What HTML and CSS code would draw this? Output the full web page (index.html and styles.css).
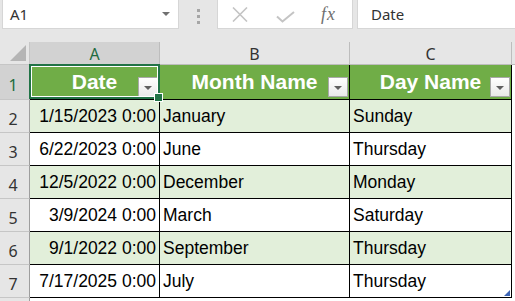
FILE: index.html
```html
<!DOCTYPE html>
<html lang="en">
<head>
<meta charset="utf-8">
<title>Sheet</title>
<link rel="stylesheet" href="styles.css">
</head>
<body>
  <div class="topbar">
    <div class="namebox">
      <span class="ref">A1</span>
      <span class="drop"></span>
    </div>
    <div class="dots"><i></i><i></i><i></i></div>
    <div class="fbtns">
      <svg class="ico-x" width="16" height="15" viewBox="0 0 16 15"><path d="M1 0.5 L15 14.5 M15 0.5 L1 14.5" stroke="#c4c4c4" stroke-width="1.6" fill="none"/></svg>
      <svg class="ico-ok" width="19" height="12" viewBox="0 0 19 12"><path d="M1 5.5 L6.5 10.5 L18 1" stroke="#c4c4c4" stroke-width="2" fill="none"/></svg>
      <span class="fx">fx</span>
    </div>
    <div class="finput">Date</div>
  </div>

  <div class="sheet">
    <div class="corner"><span class="tri"></span></div>
    <div class="colhead on">A</div>
    <div class="colhead">B</div>
    <div class="colhead">C</div>
    <div class="colhead rest"></div>

    <div class="rowhead on">1</div>
    <div class="hd sel">Date<span class="filt"></span></div>
    <div class="hd">Month Name<span class="filt"></span></div>
    <div class="hd">Day Name<span class="filt"></span></div>
    <div class="blank"></div>

    <div class="rowhead">2</div>
    <div class="c num band">1/15/2023 0:00</div>
    <div class="c band">January</div>
    <div class="c band">Sunday</div>
    <div class="blank"></div>

    <div class="rowhead">3</div>
    <div class="c num">6/22/2023 0:00</div>
    <div class="c">June</div>
    <div class="c">Thursday</div>
    <div class="blank"></div>

    <div class="rowhead">4</div>
    <div class="c num band">12/5/2022 0:00</div>
    <div class="c band">December</div>
    <div class="c band">Monday</div>
    <div class="blank"></div>

    <div class="rowhead">5</div>
    <div class="c num">3/9/2024 0:00</div>
    <div class="c">March</div>
    <div class="c">Saturday</div>
    <div class="blank"></div>

    <div class="rowhead">6</div>
    <div class="c num band">9/1/2022 0:00</div>
    <div class="c band">September</div>
    <div class="c band">Thursday</div>
    <div class="blank"></div>

    <div class="rowhead">7</div>
    <div class="c num">7/17/2025 0:00</div>
    <div class="c">July</div>
    <div class="c last">Thursday</div>
    <div class="blank"></div>

    <div class="rowhead end"></div>
  </div>
</body>
</html>
```

FILE: styles.css
```css
* {
  margin: 0;
  padding: 0;
  box-sizing: border-box;
}
body {
  width: 515px;
  height: 301px;
  overflow: hidden;
  background-color: #ffffff;
  font-family: "Liberation Sans", Arial, sans-serif;
}

/* formula bar */
.topbar {
  display: flex;
  height: 42px;
  background-color: #e6e6e6;
}
.namebox {
  display: flex;
  align-items: center;
  justify-content: space-between;
  width: 177px;
  height: 29px;
  margin-left: 2px;
  padding: 0 8px 0 7px;
  background-color: #fff;
  border: 1px solid #d6d6d6;
  border-top: none;
  font-family: "Noto Sans", sans-serif;
  font-size: 15px;
  color: #333;
}
.drop {
  width: 0;
  height: 0;
  border-left: 4px solid transparent;
  border-right: 4px solid transparent;
  border-top: 4px solid #707070;
}
.dots {
  display: flex;
  flex-direction: column;
  align-items: center;
  gap: 3px;
  width: 38px;
  padding-top: 9px;
}
.dots i {
  display: block;
  width: 3px;
  height: 3px;
  background-color: #a6a6a6;
}
.fbtns {
  display: flex;
  align-items: center;
  width: 136px;
  height: 29px;
  background-color: #fff;
  border: 1px solid #d6d6d6;
  border-top: none;
  padding-left: 14px;
}
.ico-x {
  margin-top: 1px;
}
.ico-ok {
  margin-left: 28px;
  margin-top: 5px;
}
.fx {
  margin-left: 26px;
  font-family: "Liberation Serif", serif;
  font-style: italic;
  font-size: 18px;
  color: #707070;
  letter-spacing: 1px;
}
.finput {
  flex: 1;
  height: 29px;
  margin-left: 4px;
  padding: 4px 0 0 13px;
  background-color: #fff;
  border-left: 1px solid #d6d6d6;
  border-bottom: 1px solid #d6d6d6;
  font-family: "Noto Sans", sans-serif;
  font-size: 15px;
  color: #333;
}

/* grid */
.sheet {
  display: grid;
  grid-template-columns: 30px 130px 190px 162px 1fr;
  grid-template-rows: 23px 35px repeat(6, 33px) 1fr;
  height: 259px;
}
.corner {
  position: relative;
  background-color: #e6e6e6;
  border-right: 1px solid #c6c6c6;
  border-bottom: 1px solid #c6c6c6;
}
.tri {
  position: absolute;
  left: 10px;
  top: 3px;
  width: 0;
  height: 0;
  border-left: 16px solid transparent;
  border-bottom: 16px solid #b5b5b5;
}
.colhead {
  display: flex;
  align-items: center;
  justify-content: center;
  background-color: #e6e6e6;
  border-right: 1px solid #bdbdbd;
  border-bottom: 1px solid #bdbdbd;
  font-family: "Noto Sans", sans-serif;
  font-size: 16px;
  color: #333;
  padding-top: 1px;
}
.colhead.on {
  background-color: #d2d2d2;
  color: #1e6b40;
}
.colhead.rest {
  border-right: none;
}
.rowhead {
  display: flex;
  align-items: center;
  justify-content: center;
  background-color: #e6e6e6;
  border-right: 1px solid #9e9e9e;
  border-bottom: 1px solid #c6c6c6;
  font-family: "Noto Sans", sans-serif;
  font-size: 16px;
  color: #333;
  padding-right: 3px;
  padding-top: 6px;
}
.rowhead.on {
  background-color: #d2d2d2;
  color: #1e6b40;
}
.rowhead.end {
  border-bottom: none;
}

/* table header row */
.hd {
  position: relative;
  display: flex;
  align-items: center;
  justify-content: center;
  background-color: #70ad47;
  border-right: 1px solid #000;
  border-bottom: 1px solid #000;
  color: #fff;
  font-weight: bold;
  font-size: 21px;
  padding-bottom: 1px;
}
.hd.sel::after {
  content: "";
  position: absolute;
  top: -1px;
  left: -1px;
  right: -1px;
  bottom: 0;
  border: 2px solid #217346;
  box-shadow: inset 0 0 0 1px #fff;
  z-index: 2;
}
.hd.sel::before {
  content: "";
  position: absolute;
  right: -4px;
  bottom: -3px;
  width: 7px;
  height: 7px;
  background-color: #217346;
  border: 1px solid #fff;
  z-index: 3;
}
.filt {
  position: absolute;
  right: 1px;
  bottom: 2px;
  width: 20px;
  height: 20px;
  background: linear-gradient(#ffffff, #e9e9e9);
  border: 1px solid #a9a9a9;
}
.filt::after {
  content: "";
  position: absolute;
  left: 5px;
  top: 8px;
  border-left: 4px solid transparent;
  border-right: 4px solid transparent;
  border-top: 4px solid #5f5f5f;
}

/* data cells */
.c {
  position: relative;
  display: flex;
  align-items: center;
  padding: 1px 3px 0 3px;
  border-right: 1px solid #000;
  border-bottom: 1px solid #000;
  font-size: 17.5px;
  color: #000;
  background-color: #fff;
}
.c.band {
  background-color: #e2efda;
}
.num {
  justify-content: flex-end;
}
.last::after {
  content: "";
  position: absolute;
  right: 1px;
  bottom: 1px;
  width: 0;
  height: 0;
  border-left: 6px solid transparent;
  border-bottom: 6px solid #3c64b4;
}
.blank {
  background-color: #fff;
}
```
